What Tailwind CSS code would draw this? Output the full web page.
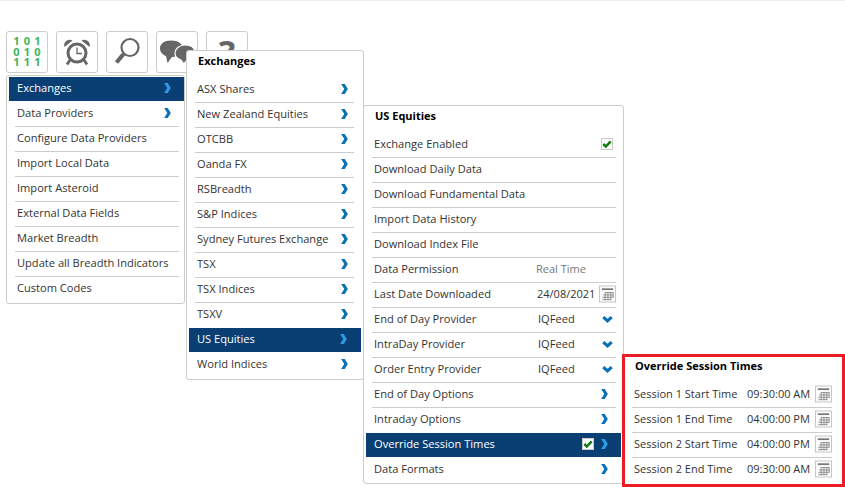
<!DOCTYPE html>
<html><head><meta charset="utf-8"><script src="https://cdn.jsdelivr.net/npm/@tailwindcss/browser@4"></script></head>
<body class="relative w-[845px] h-[487px] overflow-hidden bg-white font-['Open_Sans','Noto_Sans',sans-serif] text-[11.1px] text-[#333333]">
<div class="h-px bg-[#eeeeee]"></div>

<svg width="0" height="0" class="absolute"><defs>
<symbol id="chev" viewBox="0 0 8 12"><path d="M0 0 L4.300 0 L8 6 L4.300 12 L0 12 L3.700 6 Z" fill="currentColor"/></symbol>
<symbol id="down" viewBox="0 0 12 8"><path d="M0 2.500 L2.300 0 L6 3 L9.700 0 L12 2.500 L6 8 Z" fill="currentColor"/></symbol>
<symbol id="cal" viewBox="0 0 18 18"><rect x="0.500" y="0.500" width="17" height="17" fill="#fbfbfb" stroke="#c4c4c4"/><rect x="3" y="3" width="12" height="1.800" fill="#777"/><path d="M6.500 7.500H15M4.500 10H15M3.500 12.500H15M3.500 15H13M6.500 7V15.500M9.500 7V15.500M12.500 7V15.500M15 7V13" stroke="#777" stroke-width=".8" fill="none"/></symbol>
<symbol id="chk" viewBox="0 0 12 12"><rect x="0.500" y="0.500" width="11" height="11" fill="#fff" stroke="#c8c8c8"/><path d="M2.300 6 L4.800 8.500 L9.700 3.300" stroke="#107c10" stroke-width="2.500" fill="none"/></symbol>
</defs></svg>

<div class="absolute left-[6px] top-[31px] flex gap-[8px]">
  <div class="w-[42px] h-[42px] rounded-[3px] border border-[#cccccc] grid grid-cols-[repeat(3,10.5px)] justify-center content-center justify-items-center font-bold text-[11px] leading-[10.5px] text-[#3cb55a]"><span>1</span><span>0</span><span>1</span><span>0</span><span>1</span><span>0</span><span>1</span><span>1</span><span>1</span></div>
  <div class="w-[42px] h-[42px] rounded-[3px] border border-[#cccccc] flex items-center justify-center">
    <svg width="30" height="30" viewBox="0 0 30 30" fill="none"><circle cx="15" cy="16" r="9" stroke="#666666" stroke-width="3"/><path d="M15 10.500V16.500H20" stroke="#666666" stroke-width="1.300"/><path d="M2.500 10 A5.500 5.500 0 0 1 10.500 3.500 Z M27.500 10 A5.500 5.500 0 0 0 19.500 3.500 Z" fill="#666666"/><path d="M8 23 L5 27.500 M22 23 L25 27.500" stroke="#666666" stroke-width="2.800"/></svg>
  </div>
  <div class="w-[42px] h-[42px] rounded-[3px] border border-[#cccccc] flex items-center justify-center">
    <svg width="30" height="30" viewBox="0 0 30 30" fill="none"><circle cx="18" cy="10.500" r="8.500" stroke="#666666" stroke-width="2.200"/><path d="M11.500 17 L4.500 25.500" stroke="#666666" stroke-width="4.200"/></svg>
  </div>
  <div class="w-[42px] h-[42px] rounded-[3px] border border-[#cccccc] flex items-start justify-center pt-[8px]">
    <svg width="36" height="24" viewBox="0 0 36 24"><path d="M12 0.500 C5 0.500 1 4 1 8.500 C1 12 4 15 7 16 L8.500 23 L13 17 C20 17 24 13 24 8.500 C24 4 19 0.500 12 0.500 Z" fill="#666666"/><path d="M26 5 C20 5 16 9 16 13.500 C16 17 19 19 22 20 L25 24 L27 21 C32 21 36 17 36 13 C36 8 32 5 26 5 Z" fill="#666666" stroke="#fff" stroke-width="1.200"/></svg>
  </div>
  <div class="w-[42px] h-[42px] rounded-[3px] border border-[#cccccc] flex items-start justify-center">
    <span class="font-bold text-[34px] leading-[40px] text-[#666666]">?</span>
  </div>
</div>

<!-- Menu 1 -->
<div class="absolute left-[6px] top-[75px] w-[179px] h-[229px] bg-white rounded-[3px] border border-[#cccccc] pt-[1px] pl-[2px]">
  <div class="h-[24px] mb-px pb-[2px] bg-[#0a3f73] text-white flex items-center justify-between pl-[8px] pr-[13px]"><span>Exchanges</span><svg class="w-[7px] h-[10px] text-[#2e9be6]"><use href="#chev"/></svg></div>
  <div class="ml-[6px] mr-[5px] h-[24px] pb-[2px] pl-[2px] flex items-center justify-between pr-[8px]"><span>Data Providers</span><svg class="w-[7px] h-[10px] text-[#0a70b8]"><use href="#chev"/></svg></div>
  <div class="ml-[6px] mr-[5px] h-[25px] pb-[2px] pl-[2px] border-t border-[#cccccc] flex items-center">Configure Data Providers</div>
  <div class="ml-[6px] mr-[5px] h-[25px] pb-[2px] pl-[2px] border-t border-[#cccccc] flex items-center">Import Local Data</div>
  <div class="ml-[6px] mr-[5px] h-[25px] pb-[2px] pl-[2px] border-t border-[#cccccc] flex items-center">Import Asteroid</div>
  <div class="ml-[6px] mr-[5px] h-[25px] pb-[2px] pl-[2px] border-t border-[#cccccc] flex items-center">External Data Fields</div>
  <div class="ml-[6px] mr-[5px] h-[25px] pb-[2px] pl-[2px] border-t border-[#cccccc] flex items-center">Market Breadth</div>
  <div class="ml-[6px] mr-[5px] h-[25px] pb-[2px] pl-[2px] border-t border-[#cccccc] flex items-center">Update all Breadth Indicators</div>
  <div class="ml-[6px] mr-[5px] h-[25px] pb-[2px] pl-[2px] border-t border-[#cccccc] flex items-center">Custom Codes</div>
</div>

<!-- Menu 2 -->
<div class="absolute left-[186px] top-[50px] w-[178px] h-[330px] bg-white rounded-[3px] border border-[#cccccc] pl-[2px]">
  <div class="h-[20px] pl-[9px] flex items-center font-bold text-[11px] text-black">Exchanges</div>
  <div class="h-[7px]"></div>
  <div class="ml-[6px] mr-[9px] h-[24px] pb-[2px] pl-[2px] flex items-center justify-between pr-[6px]"><span>ASX Shares</span><svg class="w-[7px] h-[10px] text-[#0a70b8]"><use href="#chev"/></svg></div>
  <div class="ml-[6px] mr-[9px] h-[25px] pb-[2px] pl-[2px] border-t border-[#cccccc] flex items-center justify-between pr-[6px]"><span>New Zealand Equities</span><svg class="w-[7px] h-[10px] text-[#0a70b8]"><use href="#chev"/></svg></div>
  <div class="ml-[6px] mr-[9px] h-[25px] pb-[2px] pl-[2px] border-t border-[#cccccc] flex items-center justify-between pr-[6px]"><span>OTCBB</span><svg class="w-[7px] h-[10px] text-[#0a70b8]"><use href="#chev"/></svg></div>
  <div class="ml-[6px] mr-[9px] h-[25px] pb-[2px] pl-[2px] border-t border-[#cccccc] flex items-center justify-between pr-[6px]"><span>Oanda FX</span><svg class="w-[7px] h-[10px] text-[#0a70b8]"><use href="#chev"/></svg></div>
  <div class="ml-[6px] mr-[9px] h-[25px] pb-[2px] pl-[2px] border-t border-[#cccccc] flex items-center justify-between pr-[6px]"><span>RSBreadth</span><svg class="w-[7px] h-[10px] text-[#0a70b8]"><use href="#chev"/></svg></div>
  <div class="ml-[6px] mr-[9px] h-[25px] pb-[2px] pl-[2px] border-t border-[#cccccc] flex items-center justify-between pr-[6px]"><span>S&amp;P Indices</span><svg class="w-[7px] h-[10px] text-[#0a70b8]"><use href="#chev"/></svg></div>
  <div class="ml-[6px] mr-[9px] h-[25px] pb-[2px] pl-[2px] border-t border-[#cccccc] flex items-center justify-between pr-[6px]"><span>Sydney Futures Exchange</span><svg class="w-[7px] h-[10px] text-[#0a70b8]"><use href="#chev"/></svg></div>
  <div class="ml-[6px] mr-[9px] h-[25px] pb-[2px] pl-[2px] border-t border-[#cccccc] flex items-center justify-between pr-[6px]"><span>TSX</span><svg class="w-[7px] h-[10px] text-[#0a70b8]"><use href="#chev"/></svg></div>
  <div class="ml-[6px] mr-[9px] h-[25px] pb-[2px] pl-[2px] border-t border-[#cccccc] flex items-center justify-between pr-[6px]"><span>TSX Indices</span><svg class="w-[7px] h-[10px] text-[#0a70b8]"><use href="#chev"/></svg></div>
  <div class="ml-[6px] mr-[9px] h-[25px] pb-[2px] pl-[2px] border-t border-[#cccccc] flex items-center justify-between pr-[6px]"><span>TSXV</span><svg class="w-[7px] h-[10px] text-[#0a70b8]"><use href="#chev"/></svg></div>
  <div class="h-[24px] mt-px mb-px mr-[2px] pb-[2px] bg-[#0a3f73] text-white flex items-center justify-between pl-[8px] pr-[14px]"><span>US Equities</span><svg class="w-[7px] h-[10px] text-[#2e9be6]"><use href="#chev"/></svg></div>
  <div class="ml-[6px] mr-[9px] h-[24px] pb-[2px] pl-[2px] flex items-center justify-between pr-[6px]"><span>World Indices</span><svg class="w-[7px] h-[10px] text-[#0a70b8]"><use href="#chev"/></svg></div>
</div>

<!-- Menu 3 -->
<div class="absolute left-[363px] top-[105px] w-[261px] h-[379px] bg-white rounded-[3px] border border-[#cccccc] pl-[2px]">
  <div class="h-[20px] pl-[9px] flex items-center font-bold text-[11px] text-black">US Equities</div>
  <div class="h-[6px]"></div>
  <div class="ml-[6px] mr-[7px] h-[25px] pb-[1px] pl-[2px] flex items-center justify-between pr-[3px]"><span>Exchange Enabled</span><svg class="w-[12px] h-[12px]"><use href="#chk"/></svg></div>
  <div class="ml-[6px] mr-[7px] h-[25px] pb-[2px] pl-[2px] border-t border-[#cccccc] flex items-center">Download Daily Data</div>
  <div class="ml-[6px] mr-[7px] h-[25px] pb-[2px] pl-[2px] border-t border-[#cccccc] flex items-center">Download Fundamental Data</div>
  <div class="ml-[6px] mr-[7px] h-[25px] pb-[2px] pl-[2px] border-t border-[#cccccc] flex items-center">Import Data History</div>
  <div class="ml-[6px] mr-[7px] h-[25px] pb-[2px] pl-[2px] border-t border-[#cccccc] flex items-center">Download Index File</div>
  <div class="ml-[6px] mr-[7px] h-[25px] pb-[2px] pl-[2px] border-t border-[#cccccc] flex items-center"><span class="w-[162px]">Data Permission</span><span class="text-[#777777] text-[11px]">Real Time</span></div>
  <div class="ml-[6px] mr-[7px] h-[25px] pb-[2px] pl-[2px] border-t border-[#cccccc] flex items-center"><span class="w-[163px]">Last Date Downloaded</span><span class="text-[11px]">24/08/2021</span><svg class="ml-auto w-[17px] h-[18px]"><use href="#cal"/></svg></div>
  <div class="ml-[6px] mr-[7px] h-[25px] pb-[2px] pl-[2px] border-t border-[#cccccc] flex items-center"><span class="w-[164px]">End of Day Provider</span><span class="w-[64px]">IQFeed</span><svg class="w-[11px] h-[7px] text-[#0a70b8]"><use href="#down"/></svg></div>
  <div class="ml-[6px] mr-[7px] h-[25px] pb-[2px] pl-[2px] border-t border-[#cccccc] flex items-center"><span class="w-[164px]">IntraDay Provider</span><span class="w-[64px]">IQFeed</span><svg class="w-[11px] h-[7px] text-[#0a70b8]"><use href="#down"/></svg></div>
  <div class="ml-[6px] mr-[7px] h-[25px] pb-[2px] pl-[2px] border-t border-[#cccccc] flex items-center"><span class="w-[164px]">Order Entry Provider</span><span class="w-[64px]">IQFeed</span><svg class="w-[11px] h-[7px] text-[#0a70b8]"><use href="#down"/></svg></div>
  <div class="ml-[6px] mr-[7px] h-[25px] pb-[2px] pl-[2px] border-t border-[#cccccc] flex items-center justify-between pr-[8px]"><span>End of Day Options</span><svg class="w-[7px] h-[10px] text-[#0a70b8]"><use href="#chev"/></svg></div>
  <div class="ml-[6px] mr-[7px] h-[25px] pb-[2px] pl-[2px] border-t border-[#cccccc] flex items-center justify-between pr-[8px]"><span>Intraday Options</span><svg class="w-[7px] h-[10px] text-[#0a70b8]"><use href="#chev"/></svg></div>
  <div class="h-[24px] mt-px mb-px mr-[2px] pb-[2px] bg-[#0a3f73] text-white flex items-center pl-[8px] pr-[13px]"><span class="grow">Override Session Times</span><svg class="w-[12px] h-[12px] mr-[7px]"><use href="#chk"/></svg><svg class="w-[7px] h-[10px] text-[#2e9be6]"><use href="#chev"/></svg></div>
  <div class="ml-[6px] mr-[7px] h-[24px] pb-[2px] pl-[2px] flex items-center justify-between pr-[8px]"><span>Data Formats</span><svg class="w-[7px] h-[10px] text-[#0a70b8]"><use href="#chev"/></svg></div>
</div>

<!-- Override panel -->
<div class="absolute left-[622px] top-[354px] w-[223px] h-[133px] bg-white border-[3px] border-[#ed1c24] pl-[7px] pr-[10px] text-[11px]">
  <div class="h-[18px] pl-[3px] flex items-center font-bold text-black">Override Session Times</div>
  <div class="h-[7px]"></div>
  <div class="h-[25px] pb-[1px] pl-[2px] flex items-center"><span class="w-[113px]">Session 1 Start Time</span><span>09:30:00 AM</span><svg class="ml-auto w-[17px] h-[18px]"><use href="#cal"/></svg></div>
  <div class="h-[25px] pb-[2px] pl-[2px] border-t border-[#cccccc] flex items-center"><span class="w-[113px]">Session 1 End Time</span><span>04:00:00 PM</span><svg class="ml-auto w-[17px] h-[18px]"><use href="#cal"/></svg></div>
  <div class="h-[25px] pb-[2px] pl-[2px] border-t border-[#cccccc] flex items-center"><span class="w-[113px]">Session 2 Start Time</span><span>04:00:00 PM</span><svg class="ml-auto w-[17px] h-[18px]"><use href="#cal"/></svg></div>
  <div class="h-[25px] pb-[2px] pl-[2px] border-t border-[#cccccc] flex items-center"><span class="w-[113px]">Session 2 End Time</span><span>09:30:00 AM</span><svg class="ml-auto w-[17px] h-[18px]"><use href="#cal"/></svg></div>
</div>
</body></html>
